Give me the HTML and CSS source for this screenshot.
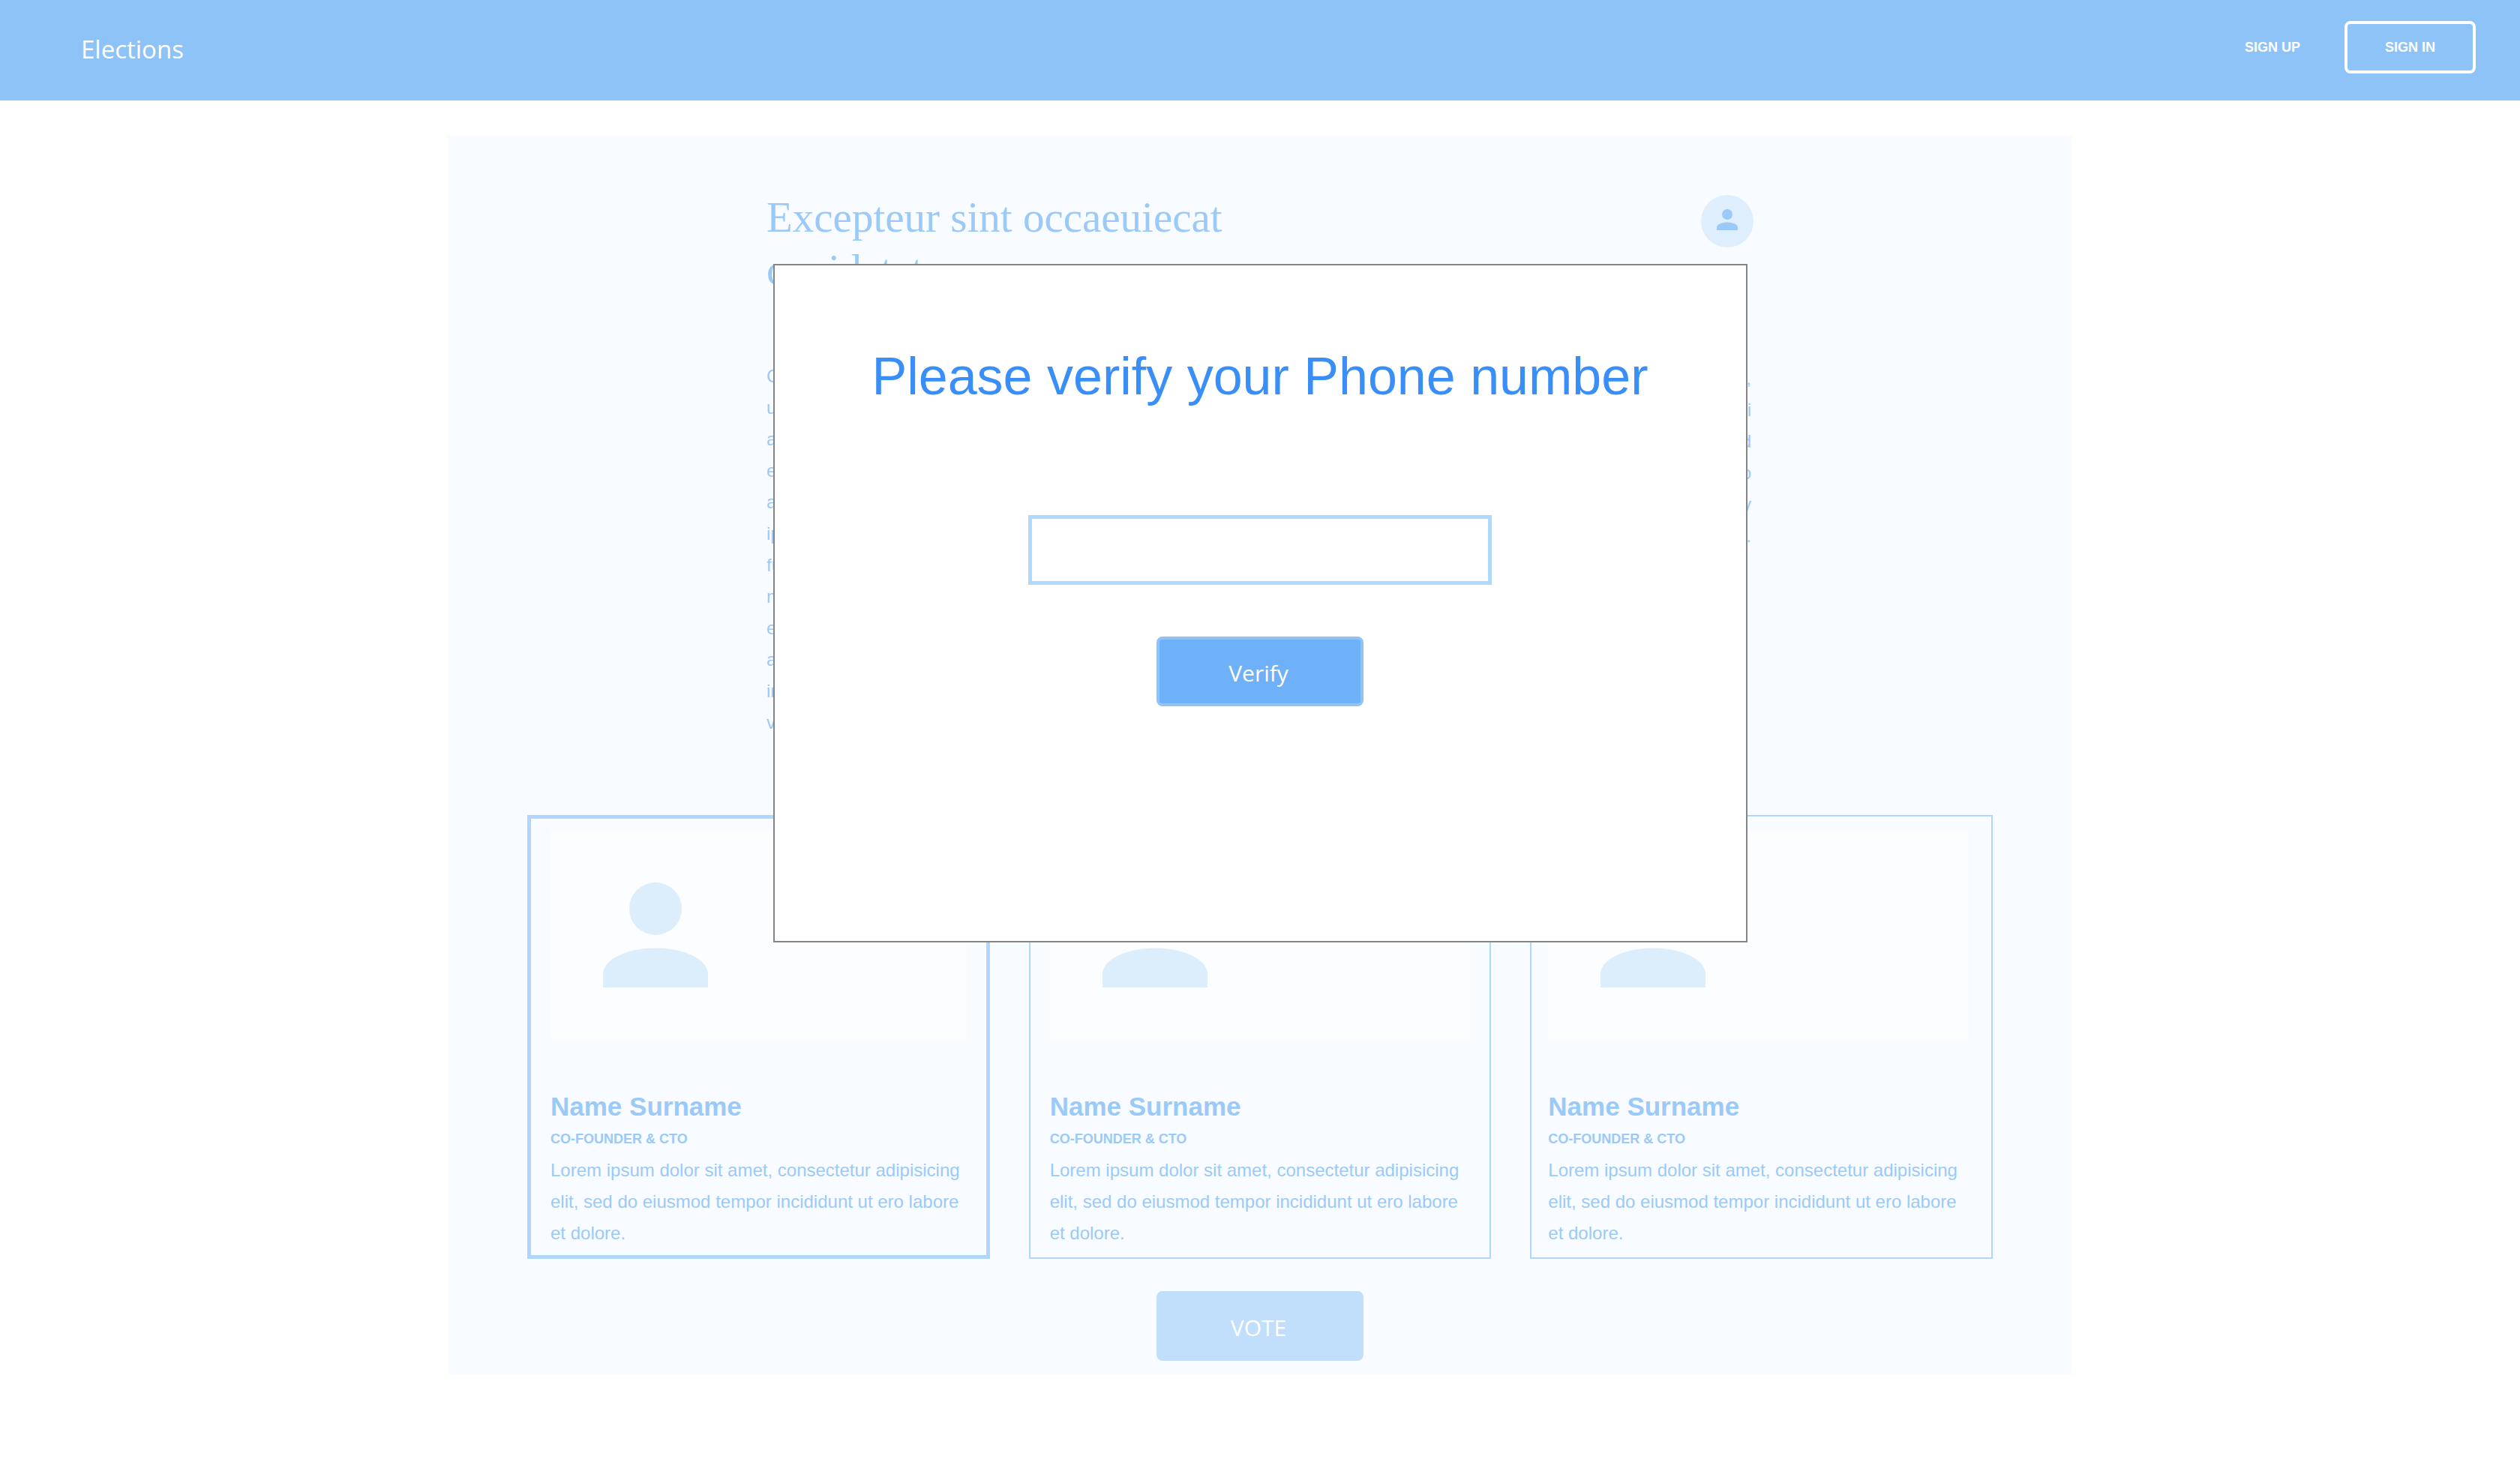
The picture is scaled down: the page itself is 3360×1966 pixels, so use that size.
FILE: index.html
```html
<!DOCTYPE html>
<html lang="en">
<head>
<meta charset="utf-8">
<meta name="viewport" content="width=device-width, initial-scale=1">
<title>Elections</title>
<link rel="stylesheet" href="styles.css">
</head>
<body>
<svg class="defs" aria-hidden="true">
  <symbol id="person" viewBox="0 0 24 24">
    <circle cx="12" cy="8" r="4"/>
    <path d="M12 14c-4.42 0-8 1.79-8 4v2h16v-2c0-2.21-3.58-4-8-4z"/>
  </symbol>
</svg>
<header class="topbar">
  <a class="brand" href="#">Elections</a>
  <nav class="nav">
    <a class="nav-link" href="#">SIGN UP</a>
    <button class="nav-button" type="button">SIGN IN</button>
  </nav>
</header>
<main class="panel">
  <section class="intro">
    <div class="intro-head">
      <h1 class="title">Excepteur sint occaeuiecat cupidatat</h1>
      <svg class="avatar" viewBox="0 0 70 70" role="img" aria-label="Account">
        <circle class="avatar-disc" cx="35" cy="35" r="35"/>
        <use class="avatar-person" href="#person" x="14" y="12" width="42" height="42"/>
      </svg>
    </div>
    <div class="columns">
      <p class="column">Consectetur<br>ut labore<br>aliquip ex ea commodo consequat duis aute<br>esse cillum dolore eu fugiat nulla pariatur<br>anim id est laborum<br>ipsum dolor sit amet<br>fugiat nulla pariatur excepteur sint occaecat<br>non proident, sunt in culpa qui officia deserunt<br>ea commodo consequat<br>aliqua ut enim ad minim<br>in reprehenderit in voluptate velit esse cillum<br>voluptate velit esse cillum dolore.</p>
      <p class="column column-end">non proident,<br>mollit anim qui<br>est laborum sed ut perspiciatis unde omnis sed<br>iste natus error sit voluptatem accusanti quo<br>totam rem aperiam y<br>ab illo inventore sit amet.</p>
    </div>
  </section>
  <section class="cards">
    <article class="card card-selected">
      <div class="photo"><svg class="photo-person" aria-hidden="true"><use href="#person"/></svg></div>
      <h2 class="name">Name Surname</h2>
      <p class="role">CO-FOUNDER &amp; CTO</p>
      <p class="bio">Lorem ipsum dolor sit amet, consectetur adipisicing elit, sed do eiusmod tempor incididunt ut ero labore et dolore.</p>
    </article>
    <article class="card">
      <div class="photo"><svg class="photo-person" aria-hidden="true"><use href="#person"/></svg></div>
      <h2 class="name">Name Surname</h2>
      <p class="role">CO-FOUNDER &amp; CTO</p>
      <p class="bio">Lorem ipsum dolor sit amet, consectetur adipisicing elit, sed do eiusmod tempor incididunt ut ero labore et dolore.</p>
    </article>
    <article class="card card-last">
      <div class="photo"><svg class="photo-person" aria-hidden="true"><use href="#person"/></svg></div>
      <h2 class="name">Name Surname</h2>
      <p class="role">CO-FOUNDER &amp; CTO</p>
      <p class="bio">Lorem ipsum dolor sit amet, consectetur adipisicing elit, sed do eiusmod tempor incididunt ut ero labore et dolore.</p>
    </article>
  </section>
  <button class="button vote" type="button">VOTE</button>
</main>
<form class="dialog" role="dialog" aria-labelledby="dialog-title">
  <h2 class="dialog-title" id="dialog-title"><label for="phone">Please verify your Phone number</label></h2>
  <input class="phone" id="phone" type="tel">
  <button class="button verify" type="button">Verify</button>
</form>
</body>
</html>
```
FILE: styles.css
```css
* {
  box-sizing: border-box;
}

body {
  position: relative;
  margin: 0;
  background: #fff;
  color: #9bcaf8;
  font-family: "Liberation Sans", Arial, sans-serif;
  font-size: 24px;
  line-height: 42px;
}

h1, h2, p {
  margin: 0;
}

button, input {
  font: inherit;
}

.defs {
  display: none;
}

.topbar {
  display: flex;
  align-items: center;
  justify-content: space-between;
  height: 134px;
  padding: 0 59px 8px 108px;
  background: #8dc3f7;
  color: #fff;
}

.brand {
  padding-top: 5px;
  color: inherit;
  font-family: "Open Sans", "Noto Sans", sans-serif;
  font-size: 33px;
  text-decoration: none;
}

.nav {
  display: flex;
  align-items: center;
  gap: 59px;
  font-size: 18px;
  font-weight: 700;
}

.nav-link {
  color: inherit;
  text-decoration: none;
}

.nav-button {
  width: 175px;
  height: 70px;
  border: 4px solid #fff;
  border-radius: 8px;
  background: transparent;
  color: inherit;
}

.panel {
  display: flex;
  flex-direction: column;
  max-width: 2166px;
  margin: 47px auto 0;
  padding: 74px 106px 19px;
  background: #f8fbff;
}

.intro {
  padding: 0 319px;
}

.intro-head {
  display: flex;
  align-items: flex-start;
  justify-content: space-between;
}

.title {
  max-width: 660px;
  font-family: Georgia, "Liberation Serif", serif;
  font-size: 57px;
  font-weight: 400;
  line-height: 70px;
}

.avatar {
  width: 70px;
  height: 70px;
  margin-top: 5px;
}

.avatar-disc {
  fill: #deeefc;
}

.avatar-person {
  fill: #9bcaf8;
}

.columns {
  display: grid;
  grid-template-columns: 1fr 1fr;
  gap: 60px;
  margin-top: 86px;
}

.column-end {
  padding: 3px 3px 0 0;
  text-align: right;
}

.cards {
  display: grid;
  grid-template-columns: repeat(3, 1fr);
  gap: 52px;
  margin-top: 102px;
}

.card {
  padding: 18px 26px 11px;
  border: 2px solid #afd7fd;
}

.card-selected {
  padding-top: 15px;
  padding-bottom: 8px;
  border-width: 5px;
}

.card-last {
  padding-right: 30px;
  padding-left: 22px;
}

.photo {
  height: 280px;
  padding: 35px;
  background: #fcfdff;
}

.photo-person {
  display: block;
  width: 210px;
  height: 210px;
  fill: #dcedfc;
}

.name {
  margin-top: 68px;
  font-size: 35px;
}

.role {
  margin-top: 10px;
  font-size: 18px;
  font-weight: 700;
  line-height: 24px;
}

.bio {
  margin-top: 9px;
}

.button {
  width: 276px;
  height: 93px;
  padding: 5px 4px 0 0;
  border: 0;
  border-radius: 8px;
  color: #fff;
  font-family: "Open Sans", "Noto Sans", sans-serif;
  font-size: 30px;
}

.vote {
  align-self: center;
  margin-top: 43px;
  background: #c1defb;
}

.dialog {
  position: absolute;
  top: 352px;
  right: 0;
  left: 0;
  display: flex;
  flex-direction: column;
  align-items: center;
  max-width: 1299px;
  margin: 0 auto;
  padding: 108px 40px 313px;
  border: 2px solid #858585;
  background: #fff;
}

.dialog-title {
  color: #3a8ef8;
  font-size: 70px;
  font-weight: 400;
  line-height: 80px;
}

.phone {
  width: 618px;
  max-width: 100%;
  height: 93px;
  margin-top: 145px;
  padding: 0 20px;
  border: 5px solid #afd8fd;
  background: #fff;
  color: #3a8ef8;
}

.verify {
  margin-top: 69px;
  border: 4px solid #8dc3f7;
  background: #6eb1f9;
}
```
